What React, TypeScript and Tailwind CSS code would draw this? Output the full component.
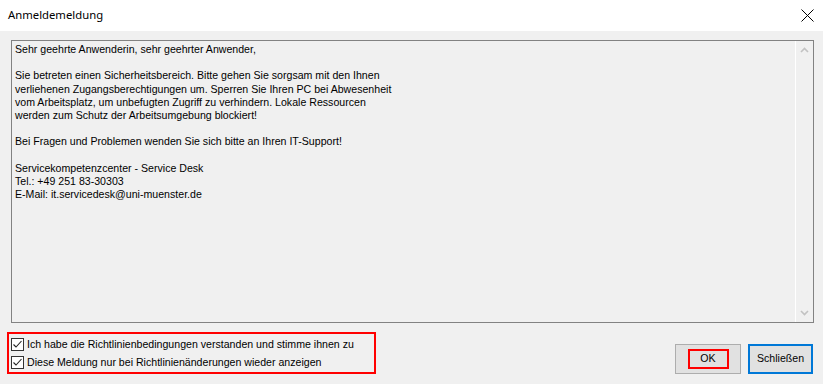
import React from "react";

const message = [
  "Sehr geehrte Anwenderin, sehr geehrter Anwender,",
  "",
  "Sie betreten einen Sicherheitsbereich. Bitte gehen Sie sorgsam mit den Ihnen",
  "verliehenen Zugangsberechtigungen um. Sperren Sie Ihren PC bei Abwesenheit",
  "vom Arbeitsplatz, um unbefugten Zugriff zu verhindern. Lokale Ressourcen",
  "werden zum Schutz der Arbeitsumgebung blockiert!",
  "",
  "Bei Fragen und Problemen wenden Sie sich bitte an Ihren IT-Support!",
  "",
  "Servicekompetenzcenter - Service Desk",
  "Tel.: +49 251 83-30303",
  "E-Mail: it.servicedesk@uni-muenster.de",
];

function CheckRow({ label }: { label: string }) {
  return (
    <label className="flex items-center h-[18px] gap-[3px]">
      <span className="w-[13px] h-[13px] border border-[#333333] bg-white flex items-center justify-center shrink-0">
        <svg width="11" height="11" viewBox="0 0 11 11">
          <path d="M1.5 5.5 L4 8 L9.5 2" fill="none" stroke="#222222" strokeWidth="1.1" />
        </svg>
      </span>
      <span className="text-[10.6px] text-black leading-none whitespace-nowrap">{label}</span>
    </label>
  );
}

export default function App() {
  return (
    <div
      className="w-[823px] h-[384px] bg-[#f0f0f0] flex flex-col overflow-hidden"
      style={{ fontFamily: '"Liberation Sans", Arial, sans-serif' }}
    >
      {/* title bar */}
      <div className="h-[31px] bg-white flex items-center justify-between pl-[8px] pr-[9px] shrink-0">
        <span className="text-[11.3px] text-black" style={{ fontFamily: '"Noto Sans", sans-serif' }}>
          Anmeldemeldung
        </span>
        <svg width="13" height="13" viewBox="0 0 13 13">
          <path d="M0.5 0.5 L12.5 12.5 M12.5 0.5 L0.5 12.5" stroke="#000" strokeWidth="1" />
        </svg>
      </div>

      {/* message box */}
      <div className="pl-[11px] pr-[9px] pt-[9px]">
        <div className="h-[283px] border border-[#828282] flex">
          <div className="flex-1 pl-[3px] pt-[2px] text-[10.6px] leading-[13.2px] text-black">
            {message.map((line, i) => (
              <div key={i} className="h-[13.2px] whitespace-pre">
                {line || " "}
              </div>
            ))}
          </div>
          <div className="w-[18px] border-l border-white flex flex-col justify-between items-center py-[6px]">
            <svg width="9" height="6" viewBox="0 0 9 6">
              <path d="M1 5 L4.5 1.5 L8 5" fill="none" stroke="#c2c2c2" strokeWidth="1.6" />
            </svg>
            <svg width="9" height="6" viewBox="0 0 9 6">
              <path d="M1 1 L4.5 4.5 L8 1" fill="none" stroke="#c2c2c2" strokeWidth="1.6" />
            </svg>
          </div>
        </div>
      </div>

      {/* bottom row */}
      <div className="flex items-end justify-between pl-[7px] pr-[10px] mt-[9px]">
        <div className="w-[369px] h-[42px] border-2 border-[#ff0000] flex flex-col justify-center pl-[2px]">
          <CheckRow label="Ich habe die Richtlinienbedingungen verstanden und stimme ihnen zu" />
          <CheckRow label="Diese Meldung nur bei Richtlinienänderungen wieder anzeigen" />
        </div>
        <div className="flex gap-[7px]">
          <button className="w-[66px] h-[30px] border border-[#adadad] bg-[#e1e1e1] flex items-center justify-center">
            <span className="w-[41px] h-[20px] border-2 border-[#ff0000] flex items-center justify-center text-[10.6px] text-black">
              OK
            </span>
          </button>
          <button className="w-[65px] h-[30px] border-2 border-[#0078d7] bg-[#e1e1e1] flex items-center justify-center text-[10.6px] text-black">
            Schließen
          </button>
        </div>
      </div>
    </div>
  );
}
